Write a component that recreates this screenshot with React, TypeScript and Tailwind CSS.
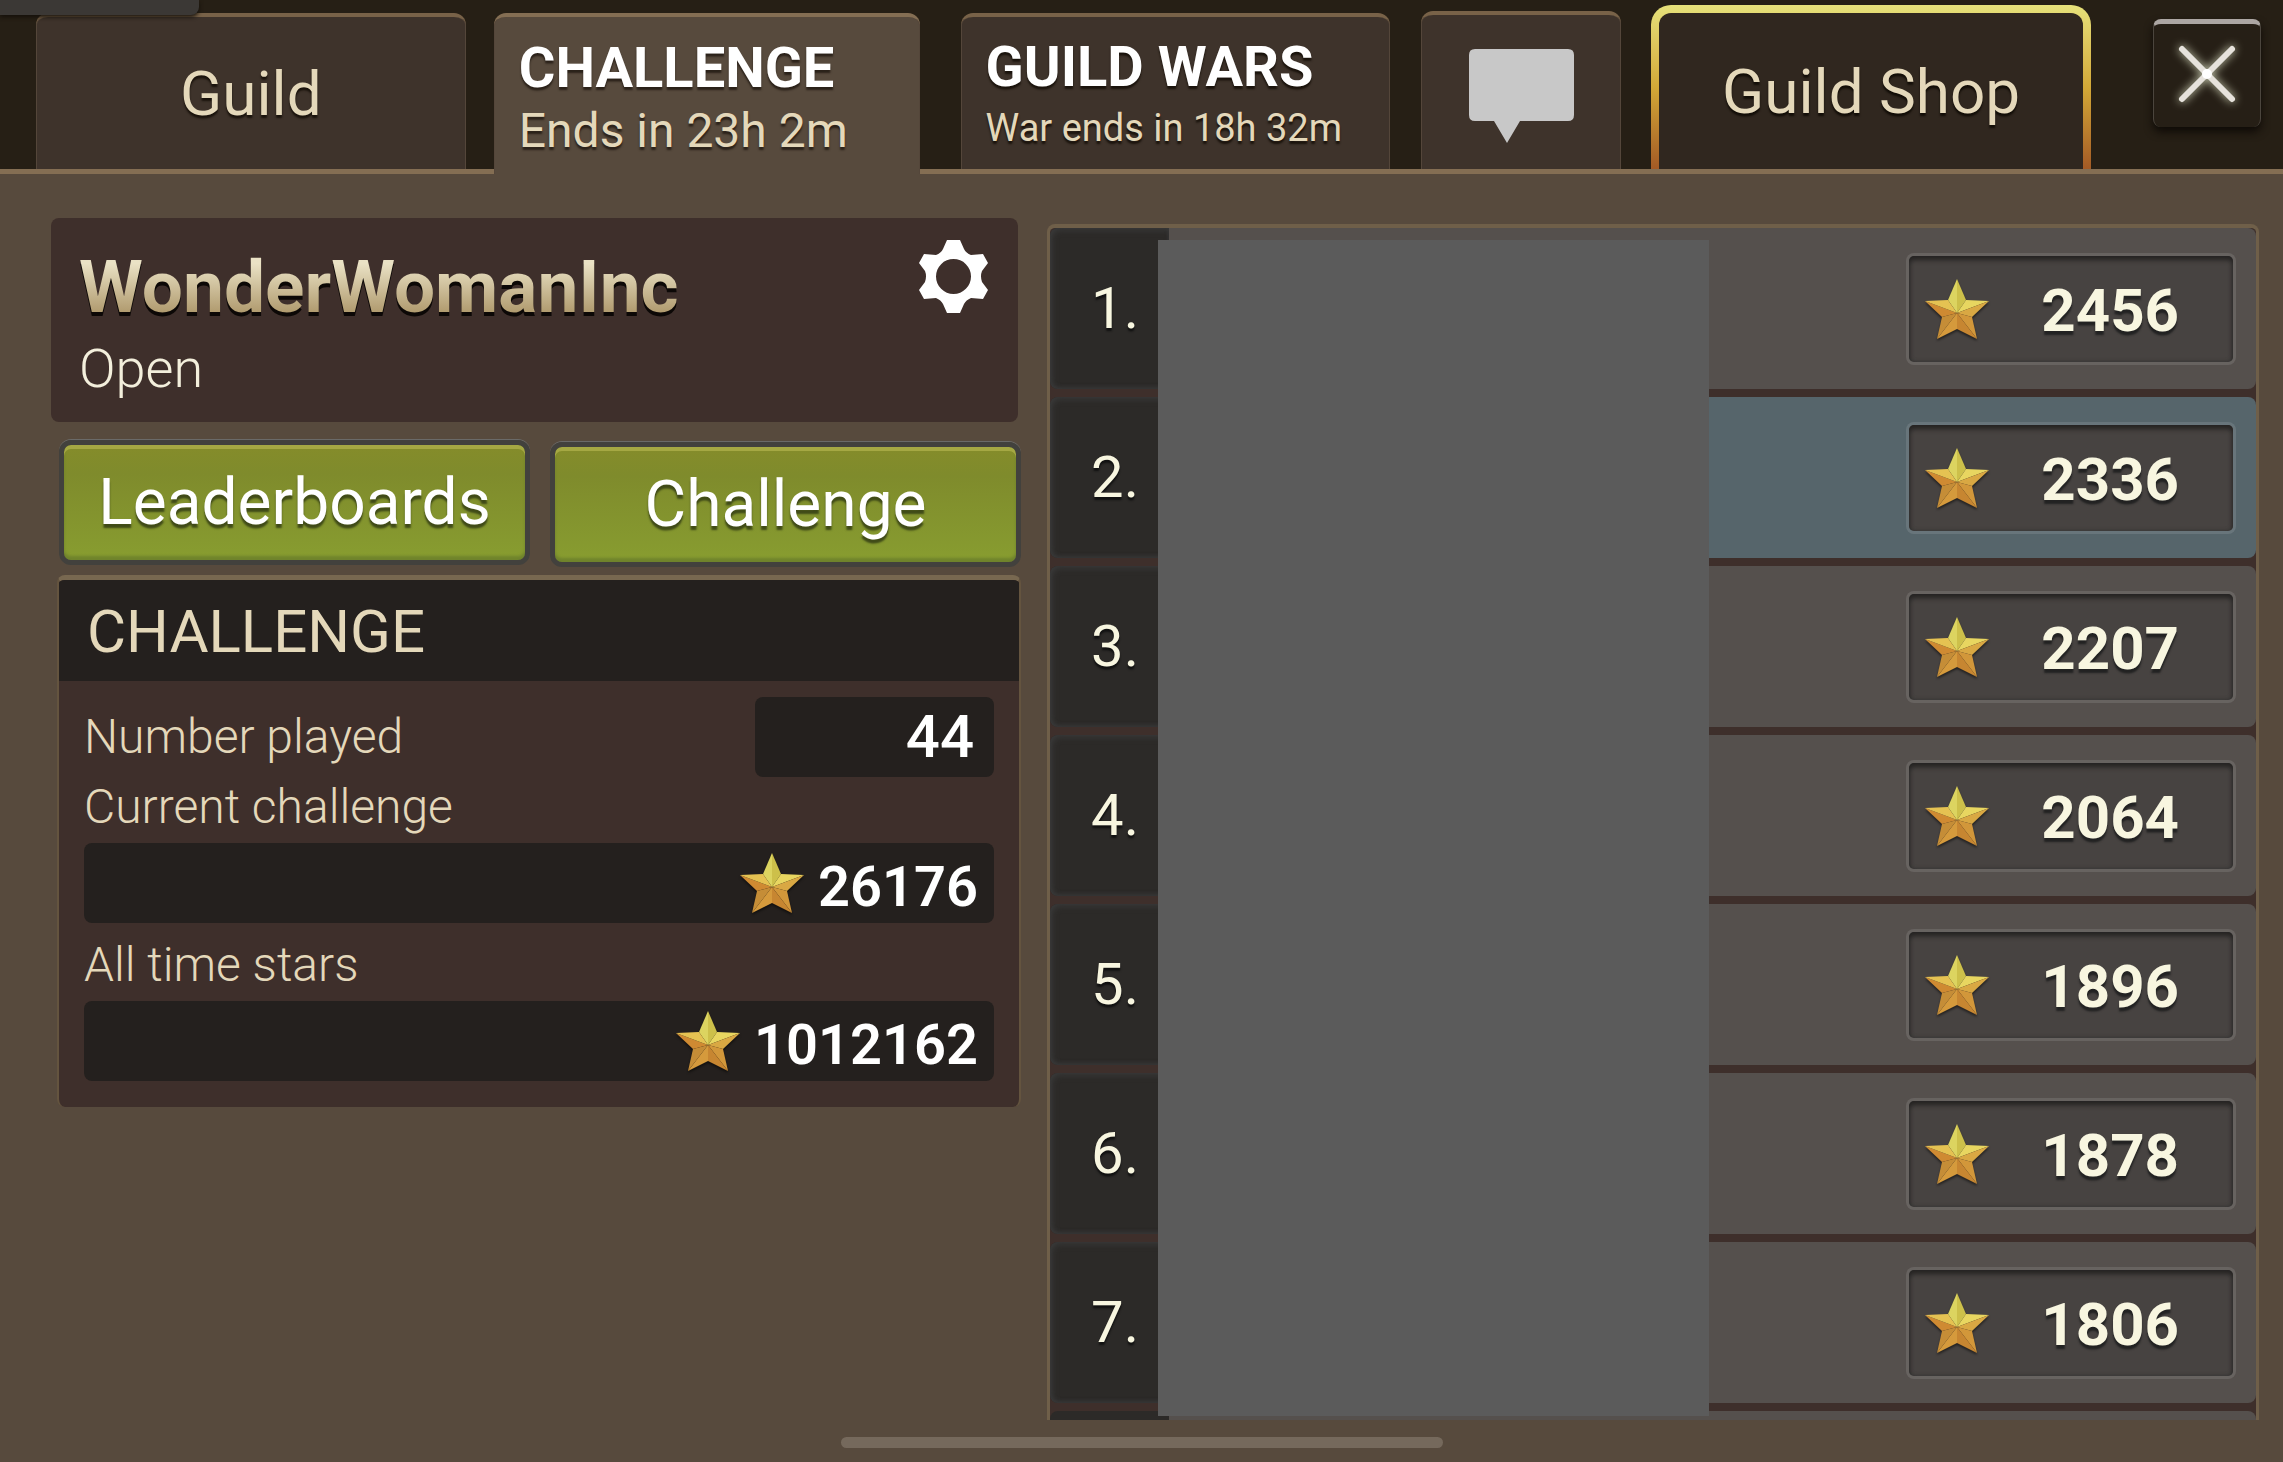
import { ReactNode } from "react";
import clsx from "clsx";

const players = [
    { rank: 1, score: 2456 },
    { rank: 2, score: 2336 },
    { rank: 3, score: 2207 },
    { rank: 4, score: 2064 },
    { rank: 5, score: 1896 },
    { rank: 6, score: 1878 },
    { rank: 7, score: 1806 },
];

const OWN_RANK = 2;

function Star() {
    return (
        <svg viewBox="0 0 64 60" className="h-[60px] w-16 shrink-0 drop-shadow-[0_2px_1px_#00000080]" aria-hidden="true">
            <polygon points="32,0 32,34 23,21" fill="#dcd460" />
            <polygon points="32,0 32,34 41,21" fill="#cdc04a" />
            <polygon points="64,22 32,34 41,21" fill="#e8d660" />
            <polygon points="64,22 32,34 47,38" fill="#d9a843" />
            <polygon points="52,60 32,34 47,38" fill="#d2973a" />
            <polygon points="52,60 32,34 32,50" fill="#c78631" />
            <polygon points="12,60 32,34 32,50" fill="#d59a3c" />
            <polygon points="12,60 32,34 17,38" fill="#c58d37" />
            <polygon points="0,22 32,34 17,38" fill="#cf8a32" />
            <polygon points="0,22 32,34 23,21" fill="#e5c252" />
        </svg>
    );
}

function Gear() {
    return (
        <svg viewBox="0 0 69 73" className="h-[73px] w-[69px]" fill="#fff" fillRule="evenodd" aria-hidden="true">
            <path d="M28 0H41L45 9Q47 13 52 15L64 14L69 23L63 31Q61 36 63 42L69 50L64 59L52 58Q47 60 45 64L41 73H28L24 64Q22 60 17 58L5 59L0 50L6 42Q8 36 6 31L0 23L5 14L17 15Q22 13 24 9ZM34.5 19A17.5 17.5 0 1 0 34.5 54A17.5 17.5 0 1 0 34.5 19Z" />
        </svg>
    );
}

function ChatBubble() {
    return (
        <svg viewBox="0 0 105 94" className="h-[94px] w-[105px]" fill="#c8c8c8" aria-hidden="true">
            <path d="M6 0H99Q105 0 105 6V66Q105 72 99 72H51L38 94L25 72H6Q0 72 0 66V6Q0 0 6 0Z" />
        </svg>
    );
}

function Cross() {
    return (
        <svg viewBox="0 0 60 60" className="h-[60px] w-[60px] drop-shadow-[0_0_5px_#d8dcc0]" aria-hidden="true">
            <path d="M5 5L55 55M55 5L5 55" stroke="#e6e2dc" strokeWidth="6" strokeLinecap="round" />
            <circle cx="30" cy="30" r="5" fill="#fff" />
        </svg>
    );
}

function Tab({ className, label, children }: { className: string; label?: string; children: ReactNode }) {
    return (
        <button
            role="tab"
            aria-label={label}
            className={clsx("rounded-t-xl border-t-4 shadow-[inset_1px_0_#54463a,inset_-1px_0_#54463a]", className)}
        >
            {children}
        </button>
    );
}

function GreenButton({ className, children }: { className?: string; children: ReactNode }) {
    return (
        <button
            className={clsx(
                "h-[125px] flex-1 rounded-xl border-[5px] border-[#42413d] bg-linear-to-b from-[#858c2a] via-[#7f8b2c] via-25% to-[#889d30] text-[64px] leading-none text-white shadow-[0_-1px_#6a6a68,inset_0_4px_#a5a843,inset_0_-4px_3px_#6f832c] text-shadow-[0_4px_2px_#3f4a18]",
                className,
            )}
        >
            {children}
        </button>
    );
}

function StarTotal({ value }: { value: number }) {
    return (
        <div className="flex h-20 items-center justify-end gap-[14px] rounded-lg bg-[#24201e] px-4 text-[56px] font-semibold text-white">
            <Star />
            <span className="pt-2 leading-[60px]">{value}</span>
        </div>
    );
}

export default function App() {
    return (
        <div className="relative flex h-screen flex-col overflow-hidden bg-[#574a3d] font-[Roboto,sans-serif] text-[#e4d8ba]">
            <header role="tablist" className="flex h-[174px] shrink-0 items-end border-b-[5px] border-[#846e53] bg-[#261f15] pr-[22px] pl-9">
                <Tab className="h-[156px] flex-[430] border-[#786248] bg-[#3e332b] text-[62px] text-shadow-[0_3px_2px_#1a130c]">Guild</Tab>
                <Tab className="relative ml-[28px] -mb-[5px] h-[161px] flex-[376] border-[#846e53] bg-[#574a3d] px-[25px] pt-2 text-left text-shadow-[0_3px_2px_#2a2119]">
                    <strong className="block text-[56px] leading-[62px] font-bold text-white">CHALLENGE</strong>
                    <span className="block text-[48px] leading-[64px] whitespace-nowrap">Ends in 23h 2m</span>
                </Tab>
                <Tab className="ml-[41px] h-[156px] flex-[380] border-[#786248] bg-[#3e332b] px-[25px] pt-2 text-left text-shadow-[0_3px_2px_#1a130c]">
                    <strong className="block text-[56px] leading-[62px] font-bold whitespace-nowrap text-white">GUILD WARS</strong>
                    <span className="block text-[38px] leading-[60px] whitespace-nowrap">War ends in 18h 32m</span>
                </Tab>
                <Tab label="Chat" className="ml-[31px] flex h-[158px] flex-[200] items-center justify-center border-[#786248] bg-[#3e332b] pt-2">
                    <ChatBubble />
                </Tab>
                <button role="tab" className="ml-[30px] h-[164px] flex-[424] rounded-t-[20px] bg-linear-to-b from-[#e6e17a] via-[#d3a937] to-[#a35a25] px-2 pt-2">
                    <span className="flex h-full items-center justify-center rounded-t-xl bg-[#30271f] text-[62px] whitespace-nowrap text-shadow-[0_3px_2px_#130e08]">Guild Shop</span>
                </button>
                <button
                    aria-label="Close"
                    className="mb-[42px] ml-[62px] flex h-[108px] w-[108px] shrink-0 items-center justify-center rounded-lg border-x border-t-[5px] border-x-[#4b453d] border-t-[#aca6a3] bg-[#261f16] pb-1 shadow-[0_5px_8px_#0f0b07]"
                >
                    <Cross />
                </button>
            </header>

            <main className="flex min-h-0 flex-1 gap-[29px] pr-6 pb-[42px] pl-[51px]">
                <section className="flex w-[967px] shrink-0 flex-col pt-11">
                    <div className="flex h-[204px] items-start justify-between rounded-lg bg-[#3e2f2b] pt-[22px] pr-[30px] pl-7">
                        <div>
                            <h1 className="bg-linear-to-b from-[#eae2c5] from-25% to-[#ad976a] to-80% bg-clip-text text-[73px] leading-[94px] font-bold text-transparent drop-shadow-[0_4px_0_#0c0806]">
                                WonderWomanInc
                            </h1>
                            <p className="text-[54px] leading-[70px] font-light text-[#f3efdc]">Open</p>
                        </div>
                        <button aria-label="Guild settings">
                            <Gear />
                        </button>
                    </div>

                    <div className="mt-[18px] -mr-[3px] flex gap-[20px] pl-2">
                        <GreenButton>Leaderboards</GreenButton>
                        <GreenButton className="mt-[2px]">Challenge</GreenButton>
                    </div>

                    <div className="mt-2 -mr-[3px] ml-[6px] overflow-hidden rounded-lg border-x-2 border-t-[5px] border-x-[#64543f] border-t-[#786850] bg-[#3e2f2b]">
                        <h2 className="h-[101px] bg-[#24201e] pl-7 text-[60px] leading-[104px]">CHALLENGE</h2>
                        <div className="px-[25px] pt-4 pb-[26px] text-[48px] font-light">
                            <div className="flex justify-between">
                                <span className="leading-[80px]">Number played</span>
                                <span className="h-20 w-[239px] rounded-lg bg-[#24201e] pr-5 text-right text-[60px] leading-[80px] font-medium text-white">44</span>
                            </div>
                            <p className="h-[66px] leading-[60px]">Current challenge</p>
                            <StarTotal value={26176} />
                            <p className="h-[78px] leading-[84px]">All time stars</p>
                            <StarTotal value={1012162} />
                        </div>
                    </div>
                </section>

                <section className="relative mt-[50px] flex-1 overflow-hidden rounded-t-lg border-x-[3px] border-t-4 border-[#6f5f49] bg-[#3e2f2b]">
                    <table className="-mt-2 w-full border-separate border-spacing-x-0 border-spacing-y-2">
                        <tbody>
                            {players.map(({ rank, score }) => (
                                <tr key={rank} className="h-[161px]">
                                    <th scope="row" className="w-[119px] rounded-l-lg bg-[#2c2a28] p-0 pr-[30px] text-right text-[58px] font-normal text-[#f8f6e0] shadow-[inset_2px_2px_6px_#3a3a3a,inset_0_-2px_4px_#363636] text-shadow-[0_3px_2px_#111]">
                                        {rank}.
                                    </th>
                                    <td className={clsx("rounded-r-lg p-0 pr-5", rank === OWN_RANK ? "bg-[#56656b]" : "bg-[#55504d]")}>
                                        <div className="ml-auto flex h-28 w-[330px] items-center rounded-lg border-[3px] border-[#ffffff1c] bg-[#474341] bg-clip-padding pr-[54px] pl-4 shadow-[inset_0_4px_5px_#252322,inset_0_0_4px_#333]">
                                            <Star />
                                            <span className="flex-1 pt-1 text-right text-[60px] leading-none font-bold text-[#f8f6e0] text-shadow-[0_4px_2px_#222]">{score}</span>
                                        </div>
                                    </td>
                                </tr>
                            ))}
                            <tr className="h-[161px]">
                                <th scope="row" className="rounded-l-lg bg-[#2c2a28]" />
                                <td className="rounded-r-lg bg-[#55504d]" />
                            </tr>
                        </tbody>
                    </table>
                    <div className="absolute top-3 bottom-1 left-[108px] w-[551px] bg-[#5b5b5b]" />
                </section>
            </main>

            <div className="absolute top-0 left-0 h-[15px] w-[199px] rounded-br-lg bg-[#3b3835] shadow-[0_2px_4px_#15100a]" />
            <div className="absolute bottom-[14px] left-1/2 h-[11px] w-[602px] -translate-x-1/2 rounded-full bg-[#75695c]" />
        </div>
    );
}
